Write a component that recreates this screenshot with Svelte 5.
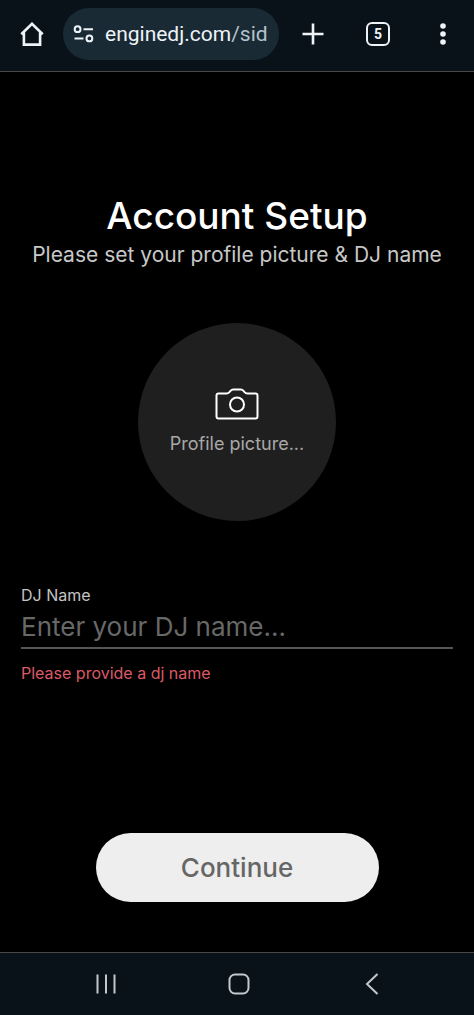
<script lang="ts">
  let djName = $state("");
  let tabCount = 5;
</script>

<div class="screen">
  <header class="toolbar">
    <button type="button" class="home" aria-label="Home">
      <svg width="26" height="26" viewBox="0 0 26 26">
        <path d="M2.3 13.2 13 2.9l10.7 10.3M4.9 11.5v12.1h16.2V11.5" />
      </svg>
    </button>
    <button type="button" class="address">
      <svg width="22" height="20" viewBox="0 0 22 20" aria-hidden="true">
        <circle cx="4.6" cy="5.2" r="2.9" />
        <path d="M10.5 5.2H20M1.5 14.4h9" />
        <circle cx="16.4" cy="14.4" r="2.9" />
      </svg>
      <span class="url">enginedj.com<span class="path">/sid</span></span>
    </button>
    <div class="actions">
      <button type="button" aria-label="New tab">
        <svg width="24" height="24" viewBox="0 0 24 24">
          <path d="M12 1.5v21M1.5 12h21" />
        </svg>
      </button>
      <button type="button" aria-label="Tabs">
        <span class="tabs">{tabCount}</span>
      </button>
      <button type="button" aria-label="Menu">
        <svg class="dots" width="24" height="24" viewBox="0 0 24 24">
          <circle cx="12" cy="4" r="2.8" />
          <circle cx="12" cy="12" r="2.8" />
          <circle cx="12" cy="20" r="2.8" />
        </svg>
      </button>
    </div>
  </header>

  <main>
    <h1>Account Setup</h1>
    <p class="subtitle">Please set your profile picture &amp; DJ name</p>

    <button type="button" class="picture">
      <svg width="44" height="32" viewBox="0 0 44 32" aria-hidden="true">
        <path d="M3.5 5.4h8.2c1.2 0 1.9-.4 2.7-1.3l1.1-1.3c.8-.9 1.5-1.3 2.7-1.3h7.6c1.2 0 1.9.4 2.7 1.3l1.1 1.3c.8.9 1.5 1.3 2.7 1.3h8.2c1.2 0 2 .8 2 2v21c0 1.2-.8 2-2 2h-37c-1.2 0-2-.8-2-2v-21c0-1.2.8-2 2-2z" />
        <circle cx="22" cy="16.5" r="7" />
      </svg>
      <span>Profile picture...</span>
    </button>

    <form>
      <label for="dj-name">DJ Name</label>
      <input id="dj-name" type="text" placeholder="Enter your DJ name..." bind:value={djName} />
      <p class="error">Please provide a dj name</p>
      <button type="button" class="continue">Continue</button>
    </form>
  </main>

  <nav>
    <button type="button" aria-label="Recent apps">
      <svg width="24" height="24" viewBox="0 0 24 24">
        <path d="M3.5 2.5v19M12 2.5v19M20.5 2.5v19" />
      </svg>
    </button>
    <button type="button" aria-label="Home screen">
      <svg width="24" height="24" viewBox="0 0 24 24">
        <rect x="2.5" y="2.5" width="19" height="19" rx="5.5" />
      </svg>
    </button>
    <button type="button" aria-label="Back">
      <svg width="24" height="24" viewBox="0 0 24 24">
        <path d="M17.5 2 7 12l10.5 10" />
      </svg>
    </button>
  </nav>
</div>

<style>
  :global(body) {
    margin: 0;
    background-color: #000;
  }

  .screen {
    min-height: 100vh;
    display: flex;
    flex-direction: column;
    background-color: #000;
    color: #fff;
    font-family: Inter, Roboto, sans-serif;
  }

  button {
    display: flex;
    align-items: center;
    justify-content: center;
    padding: 0;
    border: 0;
    background: none;
    color: inherit;
    font: inherit;
    cursor: pointer;
  }

  svg {
    flex: none;
    fill: none;
    stroke: currentColor;
    stroke-width: 2;
  }

  .toolbar {
    display: flex;
    box-sizing: border-box;
    height: 72px;
    padding: 8px 15px 11px 0;
    border-bottom: 1px solid #46484a;
    background-color: #0a1219;
    color: #eef3f8;
    font-family: Roboto, sans-serif;
  }

  .toolbar svg {
    stroke-width: 2.6;
  }

  .home {
    width: 63px;
  }

  .toolbar .address {
    flex: 1;
    justify-content: flex-start;
    gap: 10px;
    min-width: 0;
    padding: 0 10px;
    border-radius: 26px;
    background-color: #192a35;
  }

  .toolbar .address svg {
    stroke-width: 2;
  }

  .url {
    font-size: 21px;
    white-space: nowrap;
  }

  .path {
    color: #b4c2cc;
  }

  .actions {
    display: flex;
    gap: 33px;
    padding-left: 18px;
  }

  .actions button {
    width: 32px;
  }

  .toolbar .dots {
    fill: currentColor;
    stroke: none;
  }

  .tabs {
    box-sizing: border-box;
    width: 24px;
    height: 24px;
    border: 2px solid currentColor;
    border-radius: 6px;
    font-size: 14px;
    font-weight: 700;
    line-height: 20px;
    text-align: center;
  }

  main {
    flex: 1;
    display: flex;
    flex-direction: column;
    align-items: center;
    padding: 120px 21px 50px;
  }

  h1 {
    margin: 0;
    font-size: 37px;
    font-weight: 500;
    line-height: 48px;
  }

  .subtitle {
    margin: 0;
    color: #c8c8c8;
    font-size: 21px;
    line-height: 30px;
  }

  .picture {
    flex-direction: column;
    gap: 12px;
    width: 198px;
    height: 198px;
    margin: 53px 0 64px;
    border-radius: 50%;
    background-color: #1f1f1f;
  }

  .picture span {
    color: #a8a8a8;
    font-size: 18px;
    line-height: 24px;
  }

  form {
    align-self: stretch;
    display: flex;
    flex-direction: column;
    flex: 1;
  }

  label {
    color: #c4c4c4;
    font-size: 16px;
    line-height: 20px;
  }

  input {
    height: 42px;
    padding: 0;
    border: 0;
    border-bottom: 2px solid #555;
    border-radius: 0;
    outline: none;
    background: none;
    color: #fff;
    font: inherit;
    font-size: 26px;
  }

  input::placeholder {
    color: #686868;
    opacity: 1;
  }

  .error {
    margin: 14px 0 0;
    color: #dc5a66;
    font-size: 16px;
    line-height: 20px;
  }

  .continue {
    align-self: center;
    width: 283px;
    height: 69px;
    margin-top: auto;
    border-radius: 35px;
    background-color: #eee;
    color: #666;
    font-size: 26px;
    font-weight: 500;
  }

  nav {
    display: flex;
    justify-content: center;
    box-sizing: border-box;
    height: 63px;
    padding-left: 3px;
    border-top: 1px solid #46484a;
    background-color: #0a1219;
    color: #c3c8cc;
  }

  nav button {
    width: 133px;
  }
</style>
